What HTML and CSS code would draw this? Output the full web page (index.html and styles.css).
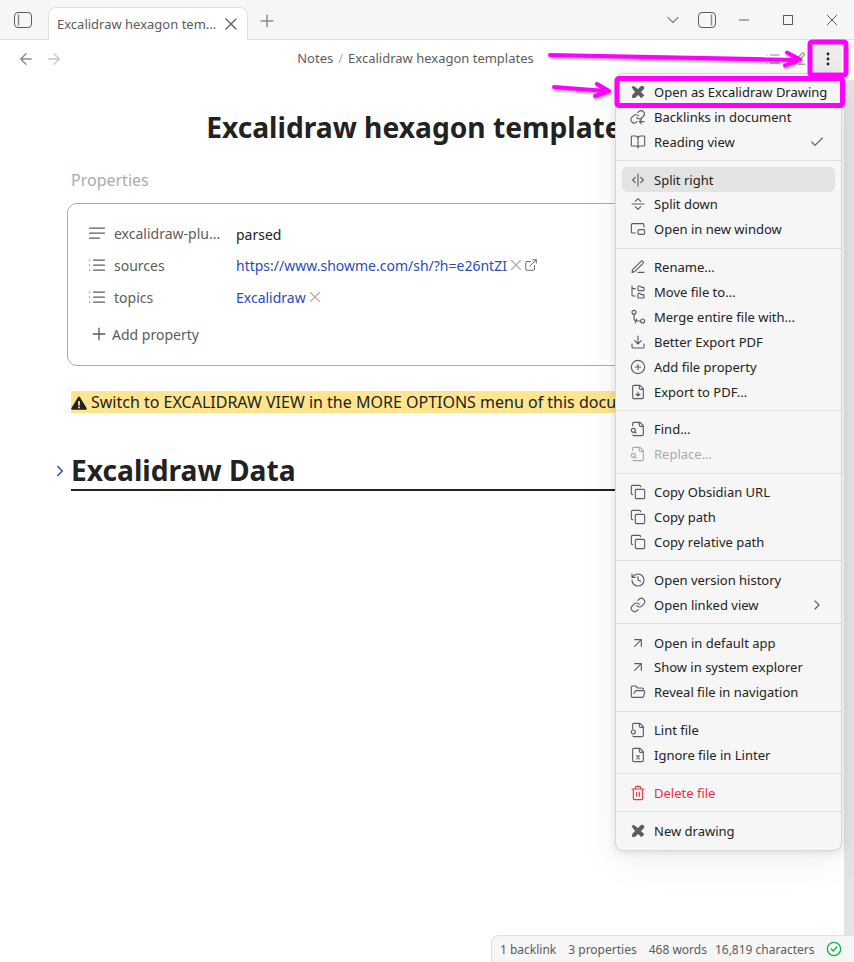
FILE: index.html
```html
<!DOCTYPE html>
<html lang="en">
<head>
<meta charset="utf-8">
<title>Excalidraw hexagon templates</title>
<link rel="stylesheet" href="styles.css">
</head>
<body>
<svg class="defs" width="0" height="0" aria-hidden="true">
  <defs>
    <symbol id="i-x" viewBox="0 0 24 24"><path d="M18 6 6 18M6 6l12 12"/></symbol>
    <symbol id="i-plus" viewBox="0 0 24 24"><path d="M5 12h14M12 5v14"/></symbol>
    <symbol id="i-down" viewBox="0 0 24 24"><path d="m6 9 6 6 6-6"/></symbol>
    <symbol id="i-right" viewBox="0 0 24 24"><path d="m9 18 6-6-6-6"/></symbol>
    <symbol id="i-back" viewBox="0 0 24 24"><path d="m12 19-7-7 7-7M19 12H5"/></symbol>
    <symbol id="i-fwd" viewBox="0 0 24 24"><path d="M5 12h14M12 5l7 7-7 7"/></symbol>
    <symbol id="i-check" viewBox="0 0 24 24"><path d="M20 6 9 17l-5-5"/></symbol>
    <symbol id="i-excali" viewBox="0 0 24 24"><path class="solid" d="M2.500 5 5 2.500l4.500 3L21.500 17 17 21.500 5.500 9.500ZM19 2.500l2.500 2.500-.5 2.500L8 20.500 3 21l.5-5L16.500 3Z"/></symbol>
    <symbol id="i-backlink" viewBox="0 0 24 24"><path d="M10 13a5 5 0 0 0 7.500.5l3-3a5 5 0 0 0-7-7l-1.700 1.700M13 10.500a5 5 0 0 0-7.500-.5l-3 3a5 5 0 0 0 7 7l1-1M21 19h-7M17 16l-3 3 3 3"/></symbol>
    <symbol id="i-book" viewBox="0 0 24 24"><path d="M12 7v14M3 18a1 1 0 0 1-1-1V4a1 1 0 0 1 1-1h5a4 4 0 0 1 4 4 4 4 0 0 1 4-4h5a1 1 0 0 1 1 1v13a1 1 0 0 1-1 1h-6a3 3 0 0 0-3 3 3 3 0 0 0-3-3Z"/></symbol>
    <symbol id="i-splitv" viewBox="0 0 24 24"><path d="M12 3v18M8 8l-4 4 4 4M16 16l4-4-4-4"/></symbol>
    <symbol id="i-splith" viewBox="0 0 24 24"><path d="M3 12h18M8 8l4-4 4 4M16 16l-4 4-4-4"/></symbol>
    <symbol id="i-window" viewBox="0 0 24 24"><path d="M21 9V6a2 2 0 0 0-2-2H4a2 2 0 0 0-2 2v10c0 1.100.9 2 2 2h4"/><rect x="12" y="13" width="10" height="7" rx="2"/></symbol>
    <symbol id="i-pencil" viewBox="0 0 24 24"><path d="M12 20h9M16.500 3.500a2.120 2.120 0 0 1 3 3L7 19l-4 1 1-4Z"/></symbol>
    <symbol id="i-tree" viewBox="0 0 24 24"><path d="M20 10a1 1 0 0 0 1-1V6a1 1 0 0 0-1-1h-2.500a1 1 0 0 1-.8-.4l-.9-1.200A1 1 0 0 0 15 3h-2a1 1 0 0 0-1 1v5a1 1 0 0 0 1 1ZM20 21a1 1 0 0 0 1-1v-3a1 1 0 0 0-1-1h-2.900a1 1 0 0 1-.88-.55l-.42-.85a1 1 0 0 0-.92-.6H13a1 1 0 0 0-1 1v5a1 1 0 0 0 1 1ZM3 5a2 2 0 0 0 2 2h3M3 3v13a2 2 0 0 0 2 2h3"/></symbol>
    <symbol id="i-merge" viewBox="0 0 24 24"><circle cx="6" cy="5" r="3"/><circle cx="19" cy="18" r="3"/><path d="M6 8v6a4 4 0 0 0 4 4h6M8 21l2-6"/></symbol>
    <symbol id="i-download" viewBox="0 0 24 24"><path d="M21 15v4a2 2 0 0 1-2 2H5a2 2 0 0 1-2-2v-4M7 10l5 5 5-5M12 15V3"/></symbol>
    <symbol id="i-pluscircle" viewBox="0 0 24 24"><circle cx="12" cy="12" r="10"/><path d="M8 12h8M12 8v8"/></symbol>
    <symbol id="i-filedown" viewBox="0 0 24 24"><path d="M15 2H6a2 2 0 0 0-2 2v16a2 2 0 0 0 2 2h12a2 2 0 0 0 2-2V7ZM14 2v4a2 2 0 0 0 2 2h4M12 18v-6M9 15l3 3 3-3"/></symbol>
    <symbol id="i-filesearch" viewBox="0 0 24 24"><path d="M14 2v4a2 2 0 0 0 2 2h4M4.270 21a2 2 0 0 0 1.730 1H18a2 2 0 0 0 2-2V7l-5-5H6a2 2 0 0 0-2 2v3M9 18l-1.500-1.500"/><circle cx="5" cy="14" r="3"/></symbol>
    <symbol id="i-lint" viewBox="0 0 24 24"><path d="M14 2v4a2 2 0 0 0 2 2h4M4.270 21a2 2 0 0 0 1.730 1H18a2 2 0 0 0 2-2V7l-5-5H6a2 2 0 0 0-2 2v6"/><circle cx="5" cy="15" r="3"/></symbol>
    <symbol id="i-filex" viewBox="0 0 24 24"><path d="M15 2H6a2 2 0 0 0-2 2v16a2 2 0 0 0 2 2h12a2 2 0 0 0 2-2V7ZM14 2v4a2 2 0 0 0 2 2h4M14 13l-4 5M10 13l4 5"/></symbol>
    <symbol id="i-copy" viewBox="0 0 24 24"><rect x="8" y="8" width="14" height="14" rx="2"/><path d="M4 16c-1.100 0-2-.9-2-2V4c0-1.100.9-2 2-2h10c1.100 0 2 .9 2 2"/></symbol>
    <symbol id="i-history" viewBox="0 0 24 24"><path d="M3 12a9 9 0 1 0 9-9 9.750 9.750 0 0 0-6.740 2.740L3 8M3 3v5h5M12 7v5l4 2"/></symbol>
    <symbol id="i-link" viewBox="0 0 24 24"><path d="M10 13a5 5 0 0 0 7.540.54l3-3a5 5 0 0 0-7.070-7.070l-1.720 1.710M14 11a5 5 0 0 0-7.540-.54l-3 3a5 5 0 0 0 7.070 7.070l1.710-1.710"/></symbol>
    <symbol id="i-upright" viewBox="0 0 24 24"><path d="M7 7h10v10M7 17 17 7"/></symbol>
    <symbol id="i-folder" viewBox="0 0 24 24"><path d="m6 14 1.500-2.900A2 2 0 0 1 9.240 10H20a2 2 0 0 1 1.940 2.500l-1.540 6a2 2 0 0 1-1.950 1.500H4a2 2 0 0 1-2-2V5a2 2 0 0 1 2-2h3.900a2 2 0 0 1 1.690.9l.81 1.200a2 2 0 0 0 1.670.9H18a2 2 0 0 1 2 2v2"/></symbol>
    <symbol id="i-trash" viewBox="0 0 24 24"><path d="M3 6h18M19 6v14c0 1-1 2-2 2H7c-1 0-2-1-2-2V6M8 6V4c0-1 1-2 2-2h4c1 0 2 1 2 2v2M10 11v6M14 11v6"/></symbol>
    <symbol id="i-lines" viewBox="0 0 24 24"><path d="M3 6h18M3 12h18M3 18h12"/></symbol>
    <symbol id="i-list" viewBox="0 0 24 24"><path d="M8 6h13M8 12h13M8 18h13M3 6h.01M3 12h.01M3 18h.01"/></symbol>
    <symbol id="i-ext" viewBox="0 0 24 24"><path d="M15 3h6v6M10 14 21 3M18 13v6a2 2 0 0 1-2 2H5a2 2 0 0 1-2-2V8a2 2 0 0 1 2-2h6"/></symbol>
    <symbol id="i-okcircle" viewBox="0 0 24 24"><circle cx="12" cy="12" r="10"/><path d="m8 12 3 3 5-6"/></symbol>
    <symbol id="i-warn" viewBox="0 0 16 14"><path class="warn-fill" fill-rule="evenodd" d="M8 .5c.4 0 .7.2.9.5l6.800 11.300c.4.7 0 1.500-.8 1.500H1.100c-.8 0-1.200-.8-.8-1.500L7.100 1c.2-.3.5-.5.9-.5ZM7.100 5v4.500h1.800V5ZM7.100 10.500v1.700h1.800v-1.700Z"/></symbol>
  </defs>
</svg>

<div class="app">
  <header class="tabbar">
    <button class="tb-btn sidebar-btn" aria-label="Toggle sidebar">
      <svg class="panel" viewBox="0 0 18 16" width="18" height="16"><rect x=".5" y=".5" width="17" height="15" rx="3.500"/><path class="panel-line" d="M4.500 2.500v11"/></svg>
    </button>
    <div class="tab">
      <span class="tab-title">Excalidraw hexagon tem...</span>
      <svg class="ic ic-tab"><use href="#i-x"/></svg>
    </div>
    <button class="tb-btn plus-btn" aria-label="New tab"><svg class="ic ic-plus"><use href="#i-plus"/></svg></button>
    <div class="tb-spacer"></div>
    <button class="tb-btn" aria-label="Tab list"><svg class="ic ic-chev"><use href="#i-down"/></svg></button>
    <button class="tb-btn right-panel" aria-label="Toggle right panel">
      <svg class="panel" viewBox="0 0 18 16" width="18" height="16"><rect x=".5" y=".5" width="17" height="15" rx="3.500"/><path class="panel-line" d="M13.500 2.500v11"/></svg>
    </button>
    <div class="win-controls">
      <svg class="win" viewBox="0 0 12 12"><path d="M1 6h10"/></svg>
      <svg class="win" viewBox="0 0 12 12"><rect x="1.500" y="1.500" width="9" height="9"/></svg>
      <svg class="win" viewBox="0 0 12 12"><path d="m1 1 10 10M11 1 1 11"/></svg>
    </div>
  </header>

  <nav class="navbar">
    <div class="nav-side nav-left">
      <button class="nav-btn"><svg class="ic ic-nav"><use href="#i-back"/></svg></button>
      <button class="nav-btn faded"><svg class="ic ic-nav"><use href="#i-fwd"/></svg></button>
    </div>
    <div class="crumbs"><span>Notes</span><span class="crumb-sep">/</span><span>Excalidraw hexagon templates</span></div>
    <div class="nav-side nav-right">
      <svg class="ic ic-menu"><use href="#i-list"/></svg>
      <svg class="ic ic-menu"><use href="#i-pencil"/></svg>
      <button class="more-btn" aria-label="More options">
        <svg viewBox="0 0 4 14" width="4" height="14"><circle cx="2" cy="2" r="1.400"/><circle cx="2" cy="7" r="1.400"/><circle cx="2" cy="12" r="1.400"/></svg>
      </button>
    </div>
  </nav>

  <main class="doc">
    <h1 class="title">Excalidraw hexagon templates</h1>
    <div class="props-label">Properties</div>
    <section class="props">
      <div class="prop">
        <div class="prop-key"><svg class="ic ic-key"><use href="#i-lines"/></svg><span>excalidraw-plu...</span></div>
        <div class="prop-val plain">parsed</div>
      </div>
      <div class="prop">
        <div class="prop-key"><svg class="ic ic-key"><use href="#i-list"/></svg><span>sources</span></div>
        <div class="prop-val"><a>https://www.showme.com/sh/?h=e26ntZI</a><svg class="ic ic-rm"><use href="#i-x"/></svg><svg class="ic ic-ext"><use href="#i-ext"/></svg></div>
      </div>
      <div class="prop">
        <div class="prop-key"><svg class="ic ic-key"><use href="#i-list"/></svg><span>topics</span></div>
        <div class="prop-val"><a>Excalidraw</a><svg class="ic ic-rm"><use href="#i-x"/></svg></div>
      </div>
      <div class="add-prop"><svg class="ic ic-add"><use href="#i-plus"/></svg><span>Add property</span></div>
    </section>
    <p class="notice"><mark><svg class="warn"><use href="#i-warn"/></svg>Switch to EXCALIDRAW VIEW in the MORE OPTIONS menu of this document.</mark></p>
    <h2 class="heading">
      <svg class="ic ic-fold"><use href="#i-right"/></svg>
      Excalidraw Data
    </h2>
  </main>

  <div class="scroll-thumb"></div>

  <div class="menu">
    <div class="item"><svg class="ic"><use href="#i-excali"/></svg>Open as Excalidraw Drawing</div>
    <div class="item"><svg class="ic"><use href="#i-backlink"/></svg>Backlinks in document</div>
    <div class="item"><svg class="ic"><use href="#i-book"/></svg>Reading view<svg class="ic end"><use href="#i-check"/></svg></div>
    <div class="sep"></div>
    <div class="item active"><svg class="ic"><use href="#i-splitv"/></svg>Split right</div>
    <div class="item"><svg class="ic"><use href="#i-splith"/></svg>Split down</div>
    <div class="item"><svg class="ic"><use href="#i-window"/></svg>Open in new window</div>
    <div class="sep"></div>
    <div class="item"><svg class="ic"><use href="#i-pencil"/></svg>Rename...</div>
    <div class="item"><svg class="ic"><use href="#i-tree"/></svg>Move file to...</div>
    <div class="item"><svg class="ic"><use href="#i-merge"/></svg>Merge entire file with...</div>
    <div class="item"><svg class="ic"><use href="#i-download"/></svg>Better Export PDF</div>
    <div class="item"><svg class="ic"><use href="#i-pluscircle"/></svg>Add file property</div>
    <div class="item"><svg class="ic"><use href="#i-filedown"/></svg>Export to PDF...</div>
    <div class="sep"></div>
    <div class="item"><svg class="ic"><use href="#i-filesearch"/></svg>Find...</div>
    <div class="item disabled"><svg class="ic"><use href="#i-filesearch"/></svg>Replace...</div>
    <div class="sep"></div>
    <div class="item"><svg class="ic"><use href="#i-copy"/></svg>Copy Obsidian URL</div>
    <div class="item"><svg class="ic"><use href="#i-copy"/></svg>Copy path</div>
    <div class="item"><svg class="ic"><use href="#i-copy"/></svg>Copy relative path</div>
    <div class="sep"></div>
    <div class="item"><svg class="ic"><use href="#i-history"/></svg>Open version history</div>
    <div class="item"><svg class="ic"><use href="#i-link"/></svg>Open linked view<svg class="ic end"><use href="#i-right"/></svg></div>
    <div class="sep"></div>
    <div class="item"><svg class="ic"><use href="#i-upright"/></svg>Open in default app</div>
    <div class="item"><svg class="ic"><use href="#i-upright"/></svg>Show in system explorer</div>
    <div class="item"><svg class="ic"><use href="#i-folder"/></svg>Reveal file in navigation</div>
    <div class="sep"></div>
    <div class="item"><svg class="ic"><use href="#i-lint"/></svg>Lint file</div>
    <div class="item"><svg class="ic"><use href="#i-filex"/></svg>Ignore file in Linter</div>
    <div class="sep"></div>
    <div class="item danger"><svg class="ic"><use href="#i-trash"/></svg>Delete file</div>
    <div class="sep"></div>
    <div class="item"><svg class="ic"><use href="#i-excali"/></svg>New drawing</div>
  </div>

  <footer class="status">
    <span>1 backlink</span>
    <span>3 properties</span>
    <span>468 words</span>
    <span class="chars">16,819 characters</span>
    <svg class="ic ic-ok"><use href="#i-okcircle"/></svg>
  </footer>

  <svg class="marks" viewBox="0 0 854 962" width="854" height="962" aria-hidden="true">
    <rect class="mark" x="810" y="42" width="36" height="33" rx="2"/>
    <rect class="mark" x="617" y="78.500" width="225.500" height="27" rx="2"/>
    <path class="mark-arrow" d="M550 55 L798 60 M787 52.500 L800 59.500 L785 65.500"/>
    <path class="mark-arrow" d="M554 87 L606 91 M597 84 L609 91 L595 96"/>
  </svg>
</div>
</body>
</html>
```

FILE: styles.css
```css
* { box-sizing: border-box; }
html, body { margin: 0; padding: 0; }
body {
  font-family: "Noto Sans", "DejaVu Sans", sans-serif;
  color: #222;
  background: #fff;
}
.defs { position: absolute; }
button { border: 0; background: none; padding: 0; display: flex; align-items: center; justify-content: center; }

.app {
  position: relative;
  width: 854px;
  height: 962px;
  overflow: hidden;
  display: flex;
  flex-direction: column;
}

.ic {
  width: 16px;
  height: 16px;
  flex: none;
  fill: none;
  stroke: #5c5c5c;
  stroke-width: 2;
  stroke-linecap: round;
  stroke-linejoin: round;
}
.solid { fill: #5c5c5c; stroke: none; }

/* title bar */
.tabbar {
  flex: none;
  height: 40px;
  background: #f6f6f6;
  border-bottom: 1px solid #e0e0e0;
  display: flex;
  align-items: center;
  padding-left: 14px;
}
.tb-btn { height: 24px; width: 24px; flex: none; }
.sidebar-btn { width: 18px; margin-right: 15.500px; }
.panel { fill: none; stroke: #5c5c5c; stroke-width: 1; }
.panel-line { stroke-width: 1.500; stroke: #8a8a8a; }
.tab {
  width: 200.500px;
  height: 33px;
  margin-top: 7px;
  background: #fff;
  border: 1px solid #e0e0e0;
  border-bottom: 0;
  border-radius: 8px 8px 0 0;
  display: flex;
  align-items: center;
  padding: 0 6px 0 8.500px;
  font-size: 13px;
  color: #5c5c5c;
}
.tab-title { flex: 1; white-space: nowrap; overflow: hidden; }
.ic-tab { width: 20px; height: 20px; stroke-width: 1.500; }
.plus-btn { margin-left: 7px; padding-top: 2px; }
.tb-btn .ic-plus { stroke: #8a8a8a; stroke-width: 1.800; width: 20px; height: 20px; }
.tb-spacer { flex: 1; }
.tb-btn .ic-chev { stroke: #8a8a8a; stroke-width: 1.600; width: 20px; height: 20px; }
.right-panel { margin-left: 10px; }
.win-controls {
  display: flex;
  align-items: center;
  gap: 32px;
  margin-left: 19px;
  padding-right: 16px;
}
.win { width: 12px; height: 12px; fill: none; stroke: #5c5c5c; stroke-width: 1; }

/* nav bar */
.navbar {
  flex: none;
  height: 38px;
  display: flex;
  align-items: center;
  padding: 0 12px 0 14px;
}
.nav-side { display: flex; align-items: center; }
.nav-left { gap: 4px; }
.nav-btn { width: 24px; height: 24px; }
.ic-nav { width: 18px; height: 18px; stroke: #8a8a8a; stroke-width: 1.800; }
.faded .ic-nav { stroke: #c8c8c8; }
.crumbs {
  flex: 1;
  display: flex;
  justify-content: center;
  gap: 5px;
  padding-bottom: 2px;
  font-size: 13px;
  color: #5c5c5c;
}
.crumb-sep { color: #ababab; }
.nav-right { width: 77px; flex: none; }
.nav-right .ic-menu { stroke: #8a8a8a; stroke-width: 1.600; margin-right: 10px; }
.nav-right .ic-menu + .ic-menu { margin-right: 6px; }
.more-btn {
  flex: none;
  width: 29px;
  height: 25px;
  border-radius: 4px;
  background: #ececec;
}
.more-btn svg { fill: #222; }

/* document */
.doc {
  flex: 1;
  width: 775px;
  padding: 0 0 0 71px;
}
.title {
  margin: 0;
  padding-top: 30px;
  width: 700px;
  text-align: center;
  font-size: 28.200px;
  line-height: 38px;
  font-weight: 700;
  white-space: nowrap;
  color: #222;
}
.props-label {
  margin-top: 23px;
  font-size: 16px;
  line-height: 22px;
  color: #ababab;
}
.props {
  margin: 12px 0 0 -4px;
  width: 708px;
  height: 163px;
  border: 1px solid #ababab;
  border-radius: 10px;
  padding: 13px 0 0 21px;
}
.prop {
  height: 32px;
  display: flex;
  align-items: center;
  font-size: 14px;
}
.prop-key {
  width: 147px;
  display: flex;
  align-items: center;
  gap: 7px;
  color: #5c5c5c;
}
.ic-key { width: 20px; height: 20px; margin-left: -2px; stroke-width: 1.500; }
.prop-val { display: flex; align-items: center; }
.prop-val.plain { color: #222; padding-top: 2px; }
.prop-val a { color: #2c4bb8; }
.ic-rm { width: 18px; height: 18px; stroke: #ababab; stroke-width: 1.500; }
.ic-ext { width: 14px; height: 14px; stroke: #5c5c5c; stroke-width: 1.600; margin-left: -1px; }
.add-prop {
  display: flex;
  align-items: center;
  gap: 3px;
  margin: 5px 0 0 0;
  height: 32px;
  font-size: 14px;
  color: #5c5c5c;
}
.ic-add { width: 20px; height: 20px; stroke-width: 1.600; }
.notice {
  margin: 25px 0 0;
  font-size: 16px;
  line-height: 22px;
  white-space: nowrap;
}
.notice mark { background: #fee58e; color: #222; display: inline-block; height: 22px; }
.warn { width: 16px; height: 14px; margin-right: 4px; vertical-align: -2px; }
.warn-fill { fill: #222; }
.heading {
  position: relative;
  margin: 39px 0 0;
  width: 690px;
  font-size: 28.200px;
  line-height: 37px;
  font-weight: 700;
  border-bottom: 2px solid #222;
}
.ic-fold {
  position: absolute;
  left: -20px;
  top: 10px;
  width: 18px;
  height: 18px;
  stroke: #2c4bb8;
  stroke-width: 2;
}

/* scrollbar */
.scroll-thumb {
  position: absolute;
  right: 0;
  top: 80px;
  bottom: 27px;
  width: 10px;
  background: #e3e3e3;
}

/* context menu */
.menu {
  position: absolute;
  left: 615px;
  top: 72.950px;
  width: 227px;
  background: #f6f6f6;
  border: 1px solid #d6d6d6;
  border-radius: 8px;
  padding: 5.500px 6px 6.500px;
  box-shadow: 0 2px 8px rgba(0, 0, 0, .1), 0 10px 40px rgba(0, 0, 0, .06);
  font-size: 13px;
}
.item {
  height: 24.880px;
  display: flex;
  align-items: center;
  gap: 8px;
  padding: 0 10px 0 8px;
  border-radius: 5px;
  color: #222;
  white-space: nowrap;
}
.item .ic { stroke-width: 1.700; }
.item .end { margin-left: auto; stroke-width: 1.700; }
.item.active { background: #e3e3e3; }
.item.disabled { color: #ababab; }
.item.disabled .ic { stroke: #ababab; }
.item.danger { color: #e93147; }
.item.danger .ic { stroke: #e93147; }
.sep {
  height: 1px;
  background: #e0e0e0;
  margin: 6px -6px;
}

/* status bar */
.status {
  position: absolute;
  right: 0;
  bottom: 0;
  width: 363px;
  height: 27px;
  background: #f6f6f6;
  border-top: 1px solid #e0e0e0;
  border-left: 1px solid #e0e0e0;
  border-top-left-radius: 8px;
  display: flex;
  align-items: center;
  gap: 12px;
  padding-left: 8px;
  font-size: 12px;
  color: #5c5c5c;
}
.chars { margin-left: -4px; }
.ic-ok { width: 16px; height: 16px; stroke: #08b94e; margin-left: -1px; }

/* annotation overlay */
.marks { position: absolute; left: 0; top: 0; pointer-events: none; }
.mark { fill: none; stroke: #ff00ff; stroke-width: 5; }
.mark-arrow {
  fill: none;
  stroke: #ff00ff;
  stroke-width: 4;
  stroke-linecap: round;
  stroke-linejoin: round;
  filter: drop-shadow(1px 2px 1px rgba(0, 0, 0, .35));
}
```
